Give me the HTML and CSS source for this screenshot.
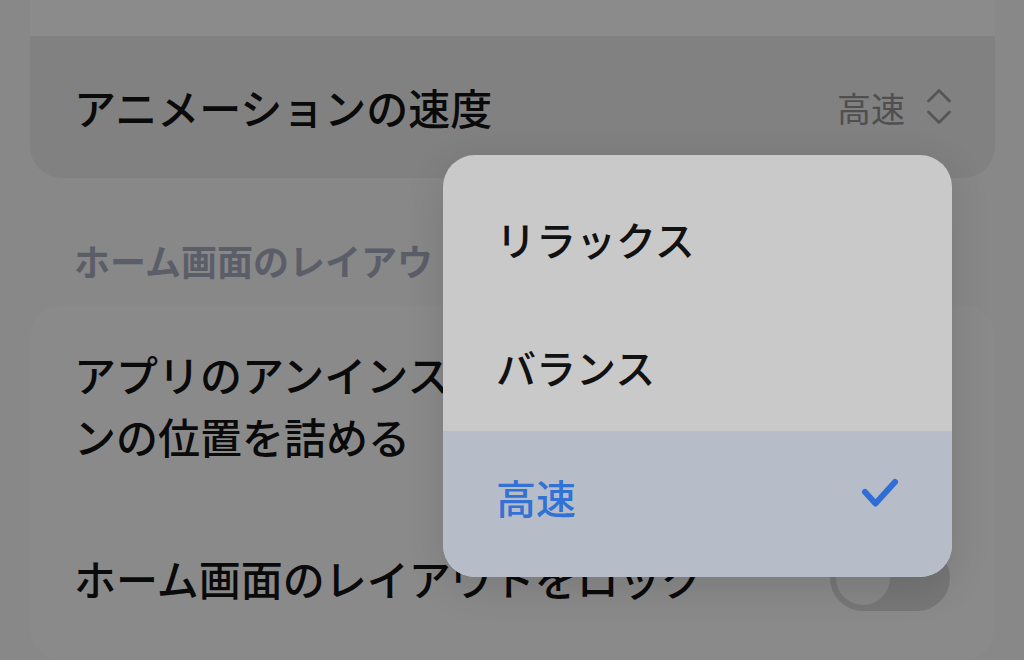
FILE: index.html
```html
<!DOCTYPE html>
<html lang="ja">
<head>
<meta charset="utf-8">
<title>設定</title>
<link rel="stylesheet" href="styles.css">
</head>
<body>
<div class="page">
  <div class="card card-top">
    <div class="row row-prev"></div>
    <div class="row row-anim">
      <span class="label">アニメーションの速度</span>
      <span class="value">高速
        <svg class="updown" width="24" height="36" viewBox="0 0 24 36" aria-hidden="true">
          <path d="M1.5 13 L12 2.5 L22.5 13" fill="none" stroke="#555" stroke-width="2.6" stroke-linecap="round" stroke-linejoin="round"/>
          <path d="M1.5 24 L12 34.5 L22.5 24" fill="none" stroke="#555" stroke-width="2.6" stroke-linecap="round" stroke-linejoin="round"/>
        </svg>
      </span>
    </div>
  </div>

  <div class="section-title">ホーム画面のレイアウト</div>

  <div class="card card-layout">
    <div class="row row-setting">
      <span class="label multi">アプリのアンインストール後にアイコンの位置を詰める</span>
      <span class="toggle"><span class="knob"></span></span>
    </div>
    <div class="row row-setting">
      <span class="label">ホーム画面のレイアウトをロック</span>
      <span class="toggle"><span class="knob"></span></span>
    </div>
  </div>
</div>

<div class="menu">
  <div class="menu-item">リラックス</div>
  <div class="menu-item">バランス</div>
  <div class="menu-item selected">
    <span>高速</span>
    <svg class="check" width="40" height="32" viewBox="0 0 40 32" aria-hidden="true">
      <path d="M5 14 L15.5 25.5 L35 4" fill="none" stroke="#2f6fd5" stroke-width="6" stroke-linecap="round" stroke-linejoin="round"/>
    </svg>
  </div>
</div>
</body>
</html>
```
FILE: styles.css
```css
* { box-sizing: border-box; }

html, body {
  margin: 0;
  padding: 0;
}

body {
  width: 1024px;
  height: 660px;
  overflow: hidden;
  background: #888888;
  font-family: "Noto Sans CJK JP", "Noto Sans", sans-serif;
  color: #0a0a0a;
  position: relative;
}

.page {
  padding: 0 29px 0 30px;
}

.card {
  border-radius: 0 0 32px 32px;
  overflow: hidden;
}

.card-top {
  background: #8b8b8b;
}

.row {
  display: flex;
  align-items: center;
  padding: 0 44px;
}

.row-prev {
  height: 36px;
}

.row-anim {
  height: 142px;
  background: #818181;
  justify-content: space-between;
}

.label {
  font-size: 42px;
  line-height: 62px;
  font-weight: 500;
}

.value {
  display: flex;
  align-items: center;
  gap: 22px;
  font-size: 34px;
  color: #4f4f4f;
}

.updown {
  display: block;
  margin-top: -2px;
}

.section-title {
  padding: 62px 44px 24px;
  font-size: 36px;
  line-height: 41px;
  font-weight: 700;
  color: #5b5e69;
}

.card-layout {
  background: #8a8a8a;
  border-radius: 32px;
  height: 355px;
}

.row-setting {
  padding: 38px 45px 40px 44px;
  gap: 30px;
}

.row-setting .label {
  flex: 1;
}

.toggle {
  flex: none;
  width: 120px;
  height: 66px;
  border-radius: 33px;
  background: #777777;
  padding: 6px;
  display: flex;
  align-items: center;
}

.knob {
  width: 54px;
  height: 54px;
  border-radius: 50%;
  background: #878787;
}

.menu {
  position: absolute;
  left: 443px;
  top: 155px;
  width: 509px;
  height: 422px;
  border-radius: 32px;
  background: #c9c9c9;
  overflow: hidden;
  padding-top: 20px;
  display: flex;
  flex-direction: column;
  box-shadow: 0 10px 40px rgba(0, 0, 0, 0.12);
}

.menu-item {
  height: 128px;
  display: flex;
  align-items: center;
  justify-content: space-between;
  padding: 0 55px 0 53px;
  font-size: 40px;
  line-height: 48px;
  font-weight: 500;
  color: #111;
}

.menu-item.selected {
  flex: 1;
  height: auto;
  background: #b7bdc8;
  color: #3272d4;
  align-items: flex-start;
  padding-top: 42px;
}

.check {
  display: block;
  margin-top: 5px;
  margin-right: -3px;
}
```
